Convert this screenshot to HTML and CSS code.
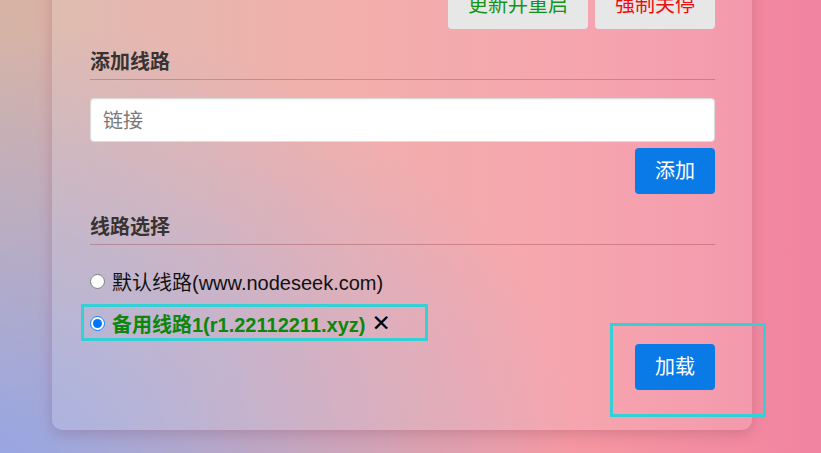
FILE: index.html
```html
<!DOCTYPE html>
<html lang="zh-CN">
<head>
    <meta charset="UTF-8">
    <meta name="viewport" content="width=device-width, initial-scale=1.0">
    <title>线路设置</title>
    <link rel="stylesheet" href="styles.css">
</head>
<body>
    <div class="panel">
        <div class="actions">
            <button class="btn-plain btn-restart">更新并重启</button>
            <button class="btn-plain btn-stop">强制关停</button>
        </div>

        <h3 class="section-title">添加线路</h3>
        <input class="link-input" type="text" placeholder="链接">
        <div class="row-end">
            <button class="btn-blue">添加</button>
        </div>

        <h3 class="section-title">线路选择</h3>
        <div class="routes">
            <label class="route">
                <input type="radio" name="route">
                <span>默认线路(www.nodeseek.com)</span>
            </label>
            <label class="route route-active">
                <input type="radio" name="route" checked>
                <span class="route-name">备用线路1(r1.22112211.xyz)</span>
                <span class="route-del">✕</span>
            </label>
        </div>
        <div class="row-end">
            <button class="btn-blue">加载</button>
        </div>

        <!-- 标注框 -->
        <div class="mark mark-route"></div>
        <div class="mark mark-load"></div>
    </div>
</body>
</html>
```

FILE: styles.css
```css
/* ===== General ===== */
html, body {
    height: 100%;
}

body {
    margin: 0;
    overflow: hidden;
    font-family: "Liberation Sans", "Noto Sans CJK SC", sans-serif;
    background:
        radial-gradient(ellipse 70% 95% at 0% 100%, rgba(152, 166, 226, 1) 0%, rgba(152, 166, 226, 0) 100%),
        linear-gradient(to right, #d6b4a6 0%, #f0a39e 40%, #f597a2 70%, #f184a0 100%);
}

/* ===== Panel ===== */
.panel {
    position: relative;
    width: 700px;
    box-sizing: border-box;
    margin: -56px 0 0 52px;
    padding: 38px 37px 40px 38px;
    background: rgba(255, 255, 255, 0.14);
    border-radius: 10px;
    box-shadow: 0 4px 14px rgba(110, 40, 70, 0.22);
}

.actions {
    display: flex;
    justify-content: flex-end;
    gap: 7px;
}

.btn-plain {
    font-family: inherit;
    font-size: 20px;
    line-height: 23px;
    padding: 12px 20px;
    border: none;
    border-radius: 4px;
    background: #e7e7e7;
    cursor: pointer;
}

.btn-restart {
    color: #13941a;
}

.btn-stop {
    color: #ee0d0d;
}

.section-title {
    margin: 21px 0 0;
    padding-bottom: 5px;
    font-size: 20px;
    line-height: 24px;
    font-weight: bold;
    color: #383333;
    border-bottom: 1px solid rgba(150, 60, 70, 0.35);
}

/* Input */
.link-input {
    display: block;
    width: 100%;
    box-sizing: border-box;
    height: 44px;
    margin-top: 18px;
    padding: 2px 12px 0;
    font-family: inherit;
    font-size: 20px;
    border: 1px solid #dcdcdc;
    border-radius: 4px;
    background: #fff;
    box-shadow: inset 0 1px 2px rgba(0, 0, 0, 0.06);
    outline: none;
}

.link-input::placeholder {
    color: #7a7a7a;
}

.row-end {
    display: flex;
    justify-content: flex-end;
    margin-top: 6px;
}

.btn-blue {
    font-family: inherit;
    font-size: 20px;
    line-height: 22px;
    padding: 12px 20px;
    border: none;
    border-radius: 4px;
    background: #0a7ae6;
    color: #fff;
    cursor: pointer;
}

/* Routes */
.routes {
    display: flex;
    flex-direction: column;
    gap: 12px;
    margin-top: 21px;
}

.route {
    display: flex;
    align-items: center;
    height: 30px;
    font-size: 20px;
    color: #111;
    cursor: pointer;
}

.route input {
    width: 15px;
    height: 15px;
    margin: 0 7px 0 0;
}

.route-name {
    color: #0b870b;
    font-weight: bold;
}

.route-del {
    margin-left: 6px;
    font-family: "DejaVu Sans", sans-serif;
    font-size: 23px;
    line-height: 1;
    color: #000;
}

/* Marks */
.mark {
    position: absolute;
    box-sizing: border-box;
    border: 3px solid #34d0d6;
}

.mark-route {
    left: 29px;
    top: 360px;
    width: 347px;
    height: 37px;
}

.mark-load {
    left: 558px;
    top: 379px;
    width: 156px;
    height: 94px;
}
```
